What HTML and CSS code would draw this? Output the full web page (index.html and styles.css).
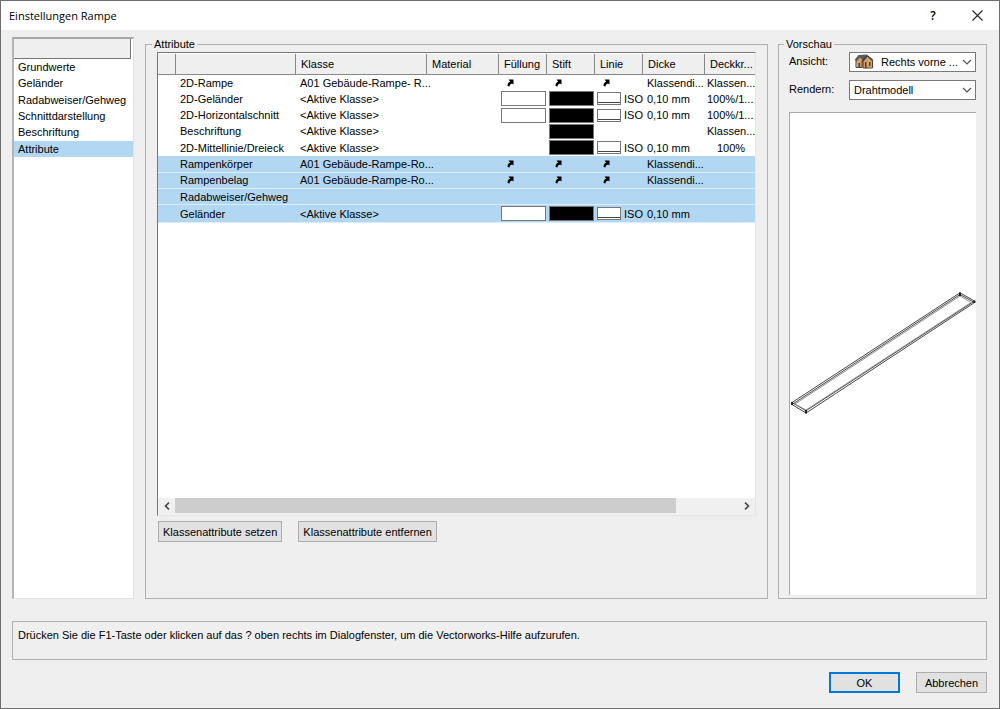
FILE: index.html
```html
<!DOCTYPE html>
<html lang="de">
<head>
<meta charset="utf-8">
<title>Einstellungen Rampe</title>
<link rel="stylesheet" href="styles.css">
</head>
<body>
<svg class="defs" aria-hidden="true">
  <symbol id="arrow" viewBox="0 0 7 8"><path d="M1.500 0.500H6.500V5.500L5 4.500C3.600 5 2.800 5.600 2.500 7.500L0.500 7C0.500 4.800 1.400 3.400 3.200 2.500Z"/></symbol>
  <symbol id="chevron" viewBox="0 0 10 6"><path d="M1 1L5 5L9 1" fill="none" stroke="#555" stroke-width="1.200"/></symbol>
</svg>
<div class="dialog">
  <header class="titlebar">
    <h1 class="title">Einstellungen Rampe</h1>
    <button class="caption-button" aria-label="Hilfe">?</button>
    <button class="caption-button" aria-label="Schließen"><svg width="11" height="11" viewBox="0 0 11 11"><path d="M.5 .5L10.500 10.500M10.500 .5L.5 10.500" stroke="#222" stroke-width="1.100"/></svg></button>
  </header>

  <main class="panes">
    <nav class="categories">
      <div class="categories-head"></div>
      <ul class="category-list">
        <li class="category">Grundwerte</li>
        <li class="category">Geländer</li>
        <li class="category">Radabweiser/Gehweg</li>
        <li class="category">Schnittdarstellung</li>
        <li class="category">Beschriftung</li>
        <li class="category selected">Attribute</li>
      </ul>
    </nav>

    <fieldset class="group attributes">
      <legend>Attribute</legend>
      <div class="table-frame">
        <table class="grid">
          <colgroup><col class="c-mark"><col class="c-name"><col class="c-class"><col class="c-material"><col class="c-swatch"><col class="c-swatch"><col class="c-line"><col class="c-weight"><col></colgroup>
          <thead>
            <tr><th></th><th></th><th>Klasse</th><th>Material</th><th>Füllung</th><th>Stift</th><th>Linie</th><th>Dicke</th><th>Deckkr...</th></tr>
          </thead>
          <tbody>
            <tr><td></td><td>2D-Rampe</td><td>A01 Gebäude-Rampe- R...</td><td></td><td><svg class="link"><use href="#arrow"/></svg></td><td><svg class="link"><use href="#arrow"/></svg></td><td><svg class="link"><use href="#arrow"/></svg></td><td>Klassendi...</td><td>Klassen...</td></tr>
            <tr><td></td><td>2D-Geländer</td><td>&lt;Aktive Klasse&gt;</td><td></td><td class="box"><div class="swatch"></div></td><td class="box"><div class="swatch pen"></div></td><td class="box"><div class="iso"><i class="line"></i>ISO</div></td><td>0,10 mm</td><td>100%/1...</td></tr>
            <tr><td></td><td>2D-Horizontalschnitt</td><td>&lt;Aktive Klasse&gt;</td><td></td><td class="box"><div class="swatch"></div></td><td class="box"><div class="swatch pen"></div></td><td class="box"><div class="iso"><i class="line"></i>ISO</div></td><td>0,10 mm</td><td>100%/1...</td></tr>
            <tr><td></td><td>Beschriftung</td><td>&lt;Aktive Klasse&gt;</td><td></td><td></td><td class="box"><div class="swatch pen"></div></td><td></td><td></td><td>Klassen...</td></tr>
            <tr><td></td><td>2D-Mittellinie/Dreieck</td><td>&lt;Aktive Klasse&gt;</td><td></td><td></td><td class="box"><div class="swatch pen"></div></td><td class="box"><div class="iso"><i class="line"></i>ISO</div></td><td>0,10 mm</td><td class="center">100%</td></tr>
            <tr class="selected"><td></td><td>Rampenkörper</td><td>A01 Gebäude-Rampe-Ro...</td><td></td><td><svg class="link"><use href="#arrow"/></svg></td><td><svg class="link"><use href="#arrow"/></svg></td><td><svg class="link"><use href="#arrow"/></svg></td><td>Klassendi...</td><td></td></tr>
            <tr class="selected"><td></td><td>Rampenbelag</td><td>A01 Gebäude-Rampe-Ro...</td><td></td><td><svg class="link"><use href="#arrow"/></svg></td><td><svg class="link"><use href="#arrow"/></svg></td><td><svg class="link"><use href="#arrow"/></svg></td><td>Klassendi...</td><td></td></tr>
            <tr class="selected"><td></td><td>Radabweiser/Gehweg</td><td></td><td></td><td></td><td></td><td></td><td></td><td></td></tr>
            <tr class="selected"><td></td><td>Geländer</td><td>&lt;Aktive Klasse&gt;</td><td></td><td class="box"><div class="swatch"></div></td><td class="box"><div class="swatch pen"></div></td><td class="box"><div class="iso"><i class="line"></i>ISO</div></td><td>0,10 mm</td><td></td></tr>
          </tbody>
        </table>
        <div class="scrollbar">
          <button class="scroll-button" aria-label="Nach links"><svg width="6" height="8" viewBox="0 0 6 8"><path d="M5 .7L1.500 4L5 7.300" fill="none" stroke="#444" stroke-width="1.600"/></svg></button>
          <div class="track"><div class="thumb"></div></div>
          <button class="scroll-button" aria-label="Nach rechts"><svg width="6" height="8" viewBox="0 0 6 8"><path d="M1 .7L4.500 4L1 7.300" fill="none" stroke="#444" stroke-width="1.600"/></svg></button>
        </div>
      </div>
      <div class="actions">
        <button class="button">Klassenattribute setzen</button>
        <button class="button">Klassenattribute entfernen</button>
      </div>
    </fieldset>

    <fieldset class="group preview">
      <legend>Vorschau</legend>
      <div class="field">
        <label for="view">Ansicht:</label>
        <div class="picker">
          <select id="view" class="with-icon"><option>Rechts vorne ...</option></select>
          <svg class="house" viewBox="0 0 20 15">
            <path d="M2 6.500L5 1.500L13 .8L18.500 5V13L12 14.500L8 13L3 13Z" fill="#d9a066"/>
            <path d="M0.500 6L4.500 1L13 .5L9 7L6 3.500L2.500 7.500Z" fill="#555b66"/>
            <path d="M13 .8L19.500 6L18 7L13.500 2.800L9.500 7.500L8 6.500Z" fill="#3d4048"/>
            <path d="M2 7V13.500H8V7M9 7V14H18.500V6.500" fill="none" stroke="#4c4038"/>
            <path d="M4.500 9H6V13H4.500ZM11 8H12.500V14H11ZM15 8H16.500V12H15Z" fill="#433e42"/>
          </svg>
          <svg class="chevron"><use href="#chevron"/></svg>
        </div>
      </div>
      <div class="field">
        <label for="render">Rendern:</label>
        <div class="picker">
          <select id="render"><option>Drahtmodell</option></select>
          <svg class="chevron"><use href="#chevron"/></svg>
        </div>
      </div>
      <div class="viewport">
        <svg class="model" viewBox="0 0 186 124" fill="none" stroke="#333" stroke-width=".9">
          <path d="M2 112.500L170 2.500L184.500 10.500L16 121Z"/>
          <path d="M2 110.500L170 .8L184.500 9L16 118.800Z"/>
          <path d="M5 112L170 4L181 10.500L16 118Z" stroke="#888"/>
          <path d="M2 110V113M170 .5V4M184.500 8.500V11M16 118V121.500" stroke="#111" stroke-width="1.800"/>
        </svg>
      </div>
    </fieldset>
  </main>

  <p class="hint">Drücken Sie die F1-Taste oder klicken auf das ? oben rechts im Dialogfenster, um die Vectorworks-Hilfe aufzurufen.</p>

  <footer class="footer">
    <button class="button primary">OK</button>
    <button class="button">Abbrechen</button>
  </footer>
</div>
</body>
</html>
```
FILE: styles.css
```css
* { box-sizing: border-box; }

body {
  margin: 0;
  color: #000;
  font: 11px/16px "Liberation Sans", Arial, sans-serif;
}

button, select { font: inherit; color: inherit; }

.defs { display: none; }

.dialog {
  display: flex;
  flex-direction: column;
  min-height: 100vh;
  background: #efefef;
  border: 1px solid #6e6e6e;
}

.titlebar {
  display: flex;
  align-items: center;
  height: 29px;
  padding-left: 8px;
  background: #fff;
}

.title {
  flex: 1;
  margin: 0;
  font: 11px/16px "Open Sans", sans-serif;
}

.caption-button {
  display: flex;
  align-items: center;
  justify-content: center;
  width: 44px;
  height: 29px;
  padding: 0;
  background: none;
  border: 0;
  font: 600 12px/16px "Open Sans", sans-serif;
}

.panes {
  flex: 1;
  display: grid;
  grid-template-columns: 123px minmax(0, 1fr) 209px;
  column-gap: 10px;
  padding: 7px 12px 0 11px;
}

.categories {
  margin-right: 1px;
  background: #fff;
  border: 1px solid #e2e2e2;
  border-top: 2px solid #a6a6a6;
  border-left: 2px solid #b4b4b4;
}

.categories-head {
  height: 20px;
  margin-right: 2px;
  background: #efefef;
  border: solid #777;
  border-width: 0 1px 1px 0;
}

.category-list {
  display: grid;
  grid-template-rows: repeat(6, 1fr);
  height: 98px;
  margin: 0;
  padding: 0;
  list-style: none;
}

.category { padding-left: 4px; }

.selected { background: #b2d7f2; }

.group {
  display: flex;
  flex-direction: column;
  min-width: 0;
  margin: 0;
  border: 1px solid #b0b0b0;
}

.group legend {
  margin-left: -5px;
  padding: 0 2px;
  line-height: 14px;
}

.attributes { padding: 1px 11px 56px; }

.table-frame {
  flex: 1;
  display: flex;
  flex-direction: column;
  justify-content: space-between;
  padding-top: 1px;
  background: #fff;
  border: 1px solid #e6e6e6;
  border-top-color: #777;
  border-left-color: #777;
}

.grid {
  width: 100%;
  height: 169px;
  table-layout: fixed;
  border-collapse: separate;
  border-spacing: 0;
}

.c-mark { width: 18px; }
.c-name { width: 120px; }
.c-class { width: 131px; }
.c-material { width: 72px; }
.c-swatch { width: 48px; }
.c-line { width: 48px; }
.c-weight { width: 62px; }

.grid th {
  height: 21px;
  padding: 0 0 0 5px;
  background: #efefef;
  border: solid #888;
  border-width: 0 1px 1px 0;
  font-weight: normal;
  text-align: left;
}

.grid th:last-child { border-right: 0; }

.grid td {
  padding: 0 0 0 4px;
  line-height: 14px;
  white-space: nowrap;
}

.grid td:last-child { padding-left: 2px; }

.grid .box { padding: 0 1px 0 2px; }
.grid .center { text-align: center; }
.grid .selected td { border-bottom: 1px solid #dcecf8; }

.link {
  display: block;
  width: 7px;
  height: 8px;
  margin-left: 4px;
}

.swatch {
  height: 15px;
  background: #fff;
  border: 1px solid #777;
}

.pen { background: #000; }

.iso {
  display: flex;
  align-items: center;
  gap: 3px;
}

.line {
  flex: none;
  width: 24px;
  height: 13px;
  background: linear-gradient(#444, #444) 0 9px / 100% 1px no-repeat #fff;
  border: 1px solid #777;
}

.scrollbar {
  display: flex;
  height: 17px;
  background: #f0f0f0;
}

.scroll-button {
  display: flex;
  align-items: center;
  justify-content: center;
  width: 17px;
  height: 15px;
  padding: 0;
  background: none;
  border: 0;
}

.track { flex: 1; }

.thumb {
  width: 89%;
  height: 15px;
  background: #cdcdcd;
}

.actions {
  display: flex;
  gap: 16px;
  margin: 5px 1px 0;
}

.button {
  min-width: 71px;
  height: 21px;
  padding: 0 4px;
  background: #e1e1e1;
  border: 1px solid #adadad;
}

.primary { border: 2px solid #0078d7; }

.preview { padding: 1px 10px 3px; }

.field {
  display: grid;
  grid-template-columns: 60px 1fr;
  margin-bottom: 8px;
  line-height: 18px;
}

.picker { position: relative; }

.picker select {
  display: block;
  width: 100%;
  height: 20px;
  padding: 0 14px 0 4px;
  appearance: none;
  background: #fff;
  border: 1px solid #7a7a7a;
  border-radius: 0;
}

.picker .with-icon { padding-left: 31px; }

.house {
  position: absolute;
  top: 2px;
  left: 5px;
  width: 20px;
  height: 15px;
}

.chevron {
  position: absolute;
  top: 7px;
  right: 4px;
  width: 10px;
  height: 6px;
}

.viewport {
  flex: 1;
  display: flex;
  align-items: center;
  margin-top: 4px;
  background: #fff;
  border: solid #aaa;
  border-width: 1px 0 0 1px;
}

.model { width: 100%; }

.hint {
  height: 39px;
  margin: 22px 12px 0 11px;
  padding: 5px;
  border: 1px solid #b0b0b0;
}

.footer {
  display: flex;
  justify-content: flex-end;
  gap: 16px;
  padding: 12px 12px 15px;
}
```
